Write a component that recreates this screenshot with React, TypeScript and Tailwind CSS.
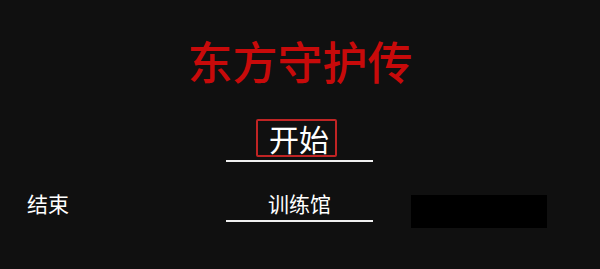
import React from "react";

const font = { fontFamily: '"Noto Sans CJK SC", "Noto Sans", sans-serif' };

export default function App() {
  return (
    <div
      className="w-[600px] h-[269px] bg-[#101010] flex flex-col overflow-hidden"
      style={font}
    >
      <div className="flex justify-center pt-[38px]">
        <h1 className="text-[45px] leading-none text-[#c80a0a] font-medium">
          东方守护传
        </h1>
      </div>
      <div className="flex flex-col items-center mt-[36px] ml-[-1px]">
        <div className="w-[147px] flex flex-col items-start">
          <div className="ml-[30px] border-2 border-[#c02424] rounded-[2px] w-[81px] h-[38px] flex items-center justify-start pl-[11px]">
            <span className="text-[30px] leading-none text-white">开始</span>
          </div>
          <div className="mt-[3px] h-[2px] w-full bg-[#f0f0f0]" />
        </div>
      </div>
      <div className="flex items-start mt-[29px]">
        <div className="w-[226px] pl-[27px] pt-[2px]">
          <span className="text-[21px] leading-none text-white">结束</span>
        </div>
        <div className="w-[147px] flex flex-col items-center">
          <span className="text-[21px] leading-none text-white pt-[2px]">训练馆</span>
          <div className="mt-[6px] h-[2px] w-full bg-[#f0f0f0]" />
        </div>
        <div className="ml-[38px] mt-[4px] w-[136px] h-[33px] bg-black" />
      </div>
    </div>
  );
}
